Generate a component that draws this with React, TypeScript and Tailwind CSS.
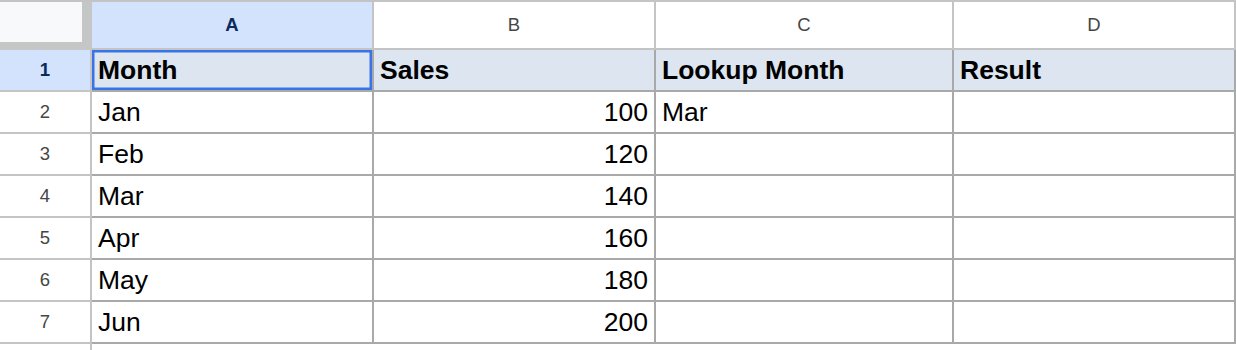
import React from 'react';

const cols = [
  { key: 'A', w: 'w-[282px]' },
  { key: 'B', w: 'w-[282px]' },
  { key: 'C', w: 'w-[298px]' },
  { key: 'D', w: 'w-[282px]' },
];

const rows: string[][] = [
  ['Month', 'Sales', 'Lookup Month', 'Result'],
  ['Jan', '100', 'Mar', ''],
  ['Feb', '120', '', ''],
  ['Mar', '140', '', ''],
  ['Apr', '160', '', ''],
  ['May', '180', '', ''],
  ['Jun', '200', '', ''],
];

const ColumnHeaders = () => (
  <div className="flex h-[50px] border-t-2 border-[#c4c4c4]">
    <div className="w-[92px] shrink-0 bg-[#c4c7c5] pb-[8px] pr-[10px]">
      <div className="h-full bg-[#f8f9fa]" />
    </div>
    {cols.map((c) => {
      const active = c.key === 'A';
      return (
        <div
          key={c.key}
          className={`${c.w} flex shrink-0 items-center justify-center border-r-2 border-b-2 border-[#c4c4c4] text-[18.5px] leading-none ${
            active ? 'bg-[#d3e3fd] font-bold text-[#0b2a5c]' : 'bg-white text-[#444746]'
          }`}
        >
          {c.key}
        </div>
      );
    })}
  </div>
);

const Row = ({ cells, index }: { cells: string[]; index: number }) => {
  const header = index === 0;
  return (
    <div className="flex h-[42px]">
      <div
        className={`flex w-[92px] shrink-0 items-center justify-center border-r-2 border-b-2 border-[#c4c4c4] text-[18.5px] leading-none ${
          header ? 'bg-[#d3e3fd] font-bold text-[#0b2a5c]' : 'bg-white text-[#444746]'
        }`}
      >
        {index + 1}
      </div>
      {cells.map((v, i) => {
        const numeric = /^\d+$/.test(v);
        const selected = header && i === 0;
        return (
          <div
            key={i}
            className={`${cols[i].w} flex shrink-0 items-center border-r-2 border-b-2 border-[#a9a9a9] px-[6px] pt-[1px] text-[26.5px] leading-none text-black ${
              numeric ? 'justify-end' : 'justify-start'
            } ${header ? 'bg-[#dce5f0] font-bold' : 'bg-white'} ${
              selected ? 'shadow-[inset_0_0_0_2.5px_#3874e8]' : ''
            }`}
          >
            {v}
          </div>
        );
      })}
    </div>
  );
};

export default function App() {
  return (
    <div
      className="h-[350px] w-[1236px] overflow-hidden bg-white"
      style={{ fontFamily: '"Liberation Sans", Arial, sans-serif' }}
    >
      <ColumnHeaders />
      {rows.map((r, i) => (
        <Row key={i} cells={r} index={i} />
      ))}
      <div className="flex h-[20px]">
        <div className="w-[92px] shrink-0 border-r-2 border-[#c4c4c4]" />
      </div>
    </div>
  );
}
